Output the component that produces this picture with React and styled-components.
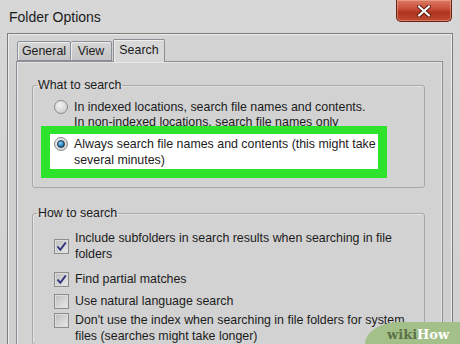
import React from 'react';
import styled, { createGlobalStyle } from 'styled-components';

const Global = createGlobalStyle`
  html, body { margin: 0; padding: 0; width: 460px; height: 344px; overflow: hidden; background: #d3d3d3; }
  body { font-family: "Liberation Sans", Arial, sans-serif; color: #1c1c1c; }
`;

const Window = styled.div`
  position: relative;
  width: 460px;
  height: 344px;
  overflow: hidden;
  display: flex;
  flex-direction: column;
  background: linear-gradient(#d7d7d7, #d1d1d1);
`;

const TitleBar = styled.div`
  height: 33px;
  flex: none;
  display: flex;
  align-items: flex-start;
  justify-content: space-between;
`;

const Title = styled.div`
  font-size: 14px;
  line-height: 16px;
  padding: 9px 0 0 9px;
  color: #1a1a1a;
`;

const CloseButton = styled.div`
  width: 56px;
  height: 22px;
  margin-right: 8px;
  box-sizing: border-box;
  border: 1px solid #6a2216;
  border-top: none;
  border-radius: 0 0 5px 5px;
  background: linear-gradient(#dc7a62 0%, #c9503a 40%, #b0341f 60%, #c04a30 100%);
  box-shadow: inset 0 0 0 1px rgba(255, 220, 210, 0.35);
  display: flex;
  align-items: center;
  justify-content: center;
`;

const Frame = styled.div`
  flex: 1;
  margin: 0 7px;
  border: 1px solid #7d7d7d;
  border-bottom: none;
  box-shadow: inset 1px 1px 0 #ebebeb, inset -1px 0 0 #ebebeb;
  padding: 6px 9px 0 8px;
  display: flex;
  flex-direction: column;
  background: linear-gradient(#d4d4d4, #cfcfcf 60px);
`;

const TabStrip = styled.div`
  height: 22px;
  flex: none;
  display: flex;
  align-items: flex-end;
  padding-left: 1px;
  margin-bottom: -1px;
  position: relative;
  z-index: 1;
`;

const Tab = styled.div`
  box-sizing: border-box;
  width: ${p => p.$w}px;
  height: ${p => (p.$active ? '23px' : '20px')};
  margin-left: ${p => (p.$active ? '1px' : '0')};
  margin-bottom: ${p => (p.$active ? '0' : '1px')};
  border: 1px solid #8b8e96;
  border-left: ${p => (p.$first || p.$active ? '1px solid #8b8e96' : 'none')};
  border-bottom: ${p => (p.$active ? 'none' : '1px solid #8b8e96')};
  border-radius: 2px 2px 0 0;
  background: ${p => (p.$active ? '#d8d8d8' : 'linear-gradient(#d6d6d6, #c4c4c4)')};
  box-shadow: inset 1px 1px 0 #eeeeee;
  font-size: 12.4px;
  line-height: 15px;
  display: flex;
  align-items: center;
  justify-content: center;
  padding-bottom: ${p => (p.$active ? '2px' : '0')};
`;

const Panel = styled.div`
  flex: 1;
  border: 1px solid #8b8e96;
  border-bottom: none;
  box-shadow: inset 1px 1px 0 #e6e6e6, inset -1px 0 0 #e6e6e6;
  background: #d2d2d2;
  padding: 16px 17px 0 15px;
`;

const Group = styled.fieldset`
  margin: ${p => p.$mt || 0}px 0 0 0;
  border: 1px solid #a7a7a7;
  border-radius: 3px;
  box-shadow: inset 1px 1px 0 #e4e4e4;
  padding: 7px 0 ${p => p.$pb}px 0;
  display: flex;
  flex-direction: column;
`;

const Legend = styled.legend`
  margin-left: 4px;
  padding: 0 1px;
  font-size: 12.4px;
  line-height: 15px;
`;

const Option = styled.div`
  display: flex;
  align-items: ${p => (p.$center ? 'center' : 'flex-start')};
  gap: 6px;
  font-size: 12.4px;
  line-height: ${p => p.$lh || 15}px;
  padding-left: 21px;
  margin-top: ${p => p.$mt || 0}px;
  white-space: nowrap;
`;

const Highlight = styled.div`
  position: relative;
  margin: -4px 37px 0 8px;
  border-style: solid;
  border-color: #2de32c;
  border-width: 8px 9px 9px 9px;
  background: #ffffff;
  padding: 2px 1px 1px 4px;
  display: flex;
  align-items: flex-start;
  gap: 6px;
  font-size: 12.4px;
  line-height: 16px;
  white-space: nowrap;
`;

const Radio = styled.span`
  flex: none;
  box-sizing: border-box;
  width: 14px;
  height: 14px;
  margin-top: ${p => p.$mt}px;
  border-radius: 50%;
  border: 1px solid #8a8a8a;
  background: radial-gradient(circle at 40% 35%, #f4f4f4, #c4c4c4);
  display: flex;
  align-items: center;
  justify-content: center;
`;

const RadioDot = styled.span`
  width: 8px;
  height: 8px;
  box-sizing: border-box;
  border-radius: 50%;
  border: 1px solid #1a3550;
  background: radial-gradient(circle at 40% 35%, #8fd3f5, #2a7fb8 55%, #0f3f66);
`;

const Check = styled.span`
  flex: none;
  box-sizing: border-box;
  width: 15px;
  height: 15px;
  margin-top: ${p => p.$mt || 0}px;
  border: 1px solid #8d8d8d;
  background: linear-gradient(135deg, #bdbdbd, #e9e9e9);
  box-shadow: inset 0 0 0 1px #dcdcdc;
  display: flex;
  align-items: center;
  justify-content: center;
`;

const Badge = styled.div`
  position: absolute;
  right: 0;
  bottom: 0;
  width: 73px;
  height: 22px;
  padding-left: 22px;
  background: #a3c088;
  border-top-left-radius: 34px 22px;
  display: flex;
  align-items: flex-end;
  font-family: "DejaVu Serif", "Liberation Serif", serif;
  font-weight: bold;
  font-size: 13px;
  line-height: 18px;
`;

const Wiki = styled.span`
  color: #5d7149;
`;
const How = styled.span`
  color: #ffffff;
`;

const CheckMark = () => (
  <svg width="11" height="11" viewBox="0 0 11 11">
    <path d="M1.5 5.5 L4.3 8.8 L9.8 1.5" fill="none" stroke="#2d2f7c" strokeWidth="1.9" />
  </svg>
);

const CloseX = () => (
  <svg width="14" height="12" viewBox="0 0 14 12">
    <path d="M2 1.5 L12 10.5 M12 1.5 L2 10.5" stroke="#5a1a10" strokeWidth="4" strokeLinecap="round" />
    <path d="M2 1.5 L12 10.5 M12 1.5 L2 10.5" stroke="#ffffff" strokeWidth="2.2" strokeLinecap="round" />
  </svg>
);

export default function App() {
  return (
    <>
      <Global />
      <Window>
        <TitleBar>
          <Title>Folder Options</Title>
          <CloseButton><CloseX /></CloseButton>
        </TitleBar>
        <Frame>
          <TabStrip>
            <Tab $w={54} $first>General</Tab>
            <Tab $w={41}>View</Tab>
            <Tab $w={52} $active>Search</Tab>
          </TabStrip>
          <Panel>
            <Group $pb={9}>
              <Legend>What to search</Legend>
              <Option>
                <Radio $mt={0} />
                <span>In indexed locations, search file names and contents.<br />In non-indexed locations, search file names only</span>
              </Option>
              <Highlight>
                <Radio $mt={1}><RadioDot /></Radio>
                <span>Always search file names and contents (this might take<br />several minutes)</span>
              </Highlight>
            </Group>
            <Group $pb={0} $mt={18}>
              <Legend>How to search</Legend>
              <Option $center $lh={16} $mt={2}>
                <Check><CheckMark /></Check>
                <span>Include subfolders in search results when searching in file<br />folders</span>
              </Option>
              <Option $center $lh={16} $mt={9}>
                <Check><CheckMark /></Check>
                <span>Find partial matches</span>
              </Option>
              <Option $center $lh={16} $mt={6}>
                <Check />
                <span>Use natural language search</span>
              </Option>
              <Option $lh={16} $mt={3}>
                <Check $mt={1} />
                <span>Don't use the index when searching in file folders for system<br />files (searches might take longer)</span>
              </Option>
            </Group>
          </Panel>
        </Frame>
        <Badge><Wiki>wiki</Wiki><How>How</How></Badge>
      </Window>
    </>
  );
}
